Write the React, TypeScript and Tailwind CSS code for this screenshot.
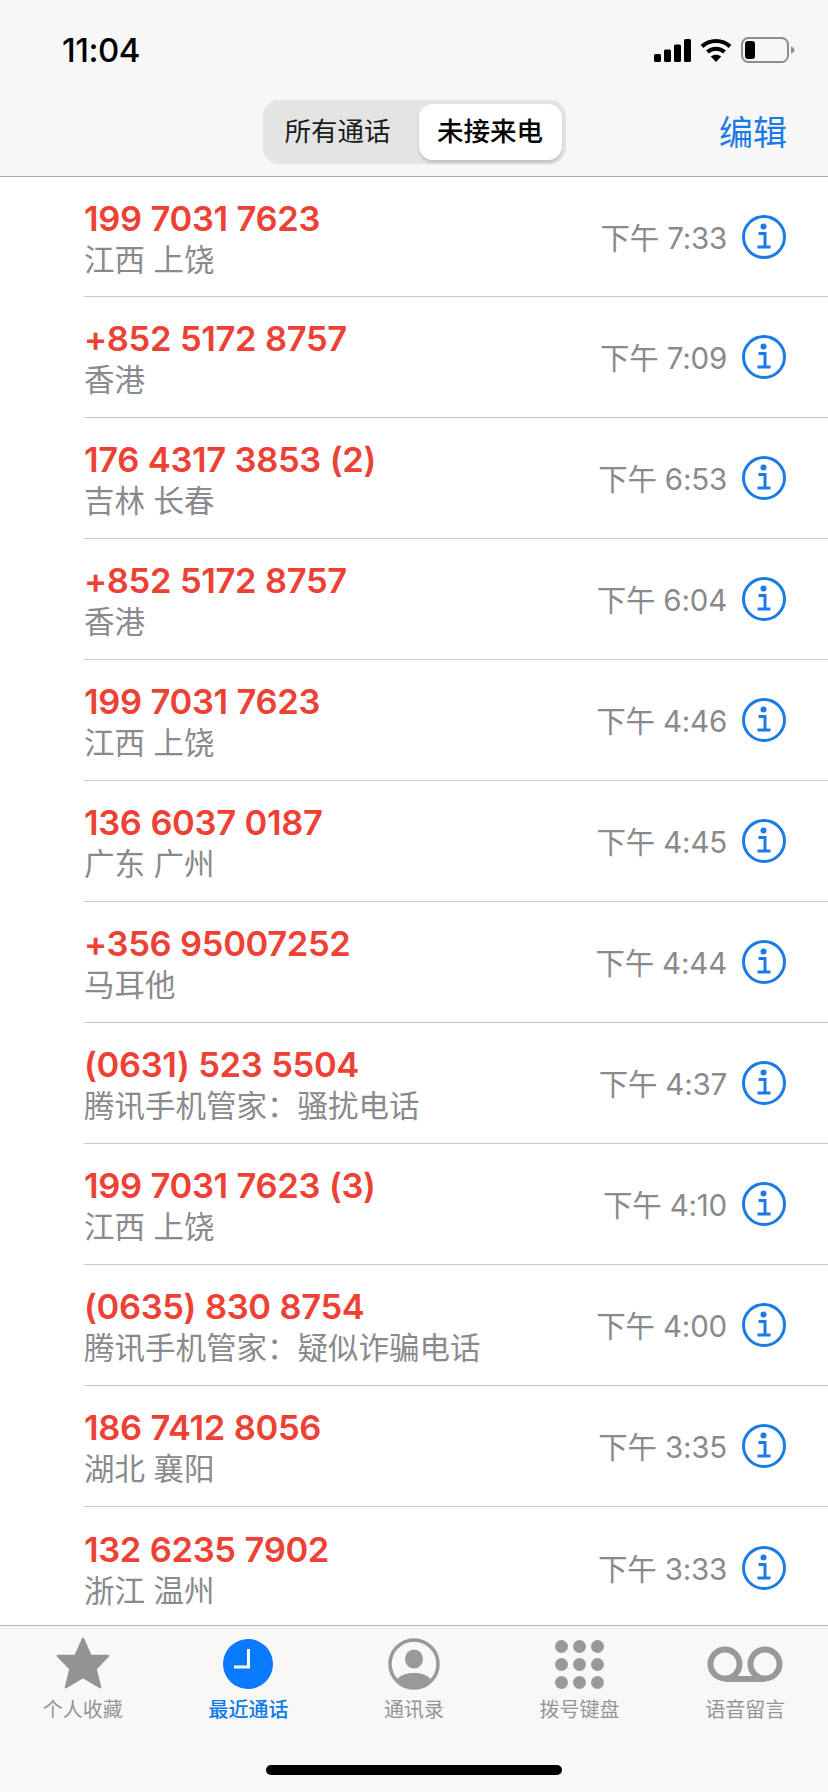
const calls = [
  ["199 7031 7623", "江西 上饶", "下午 7:33"],
  ["+852 5172 8757", "香港", "下午 7:09"],
  ["176 4317 3853 (2)", "吉林 长春", "下午 6:53"],
  ["+852 5172 8757", "香港", "下午 6:04"],
  ["199 7031 7623", "江西 上饶", "下午 4:46"],
  ["136 6037 0187", "广东 广州", "下午 4:45"],
  ["+356 95007252", "马耳他", "下午 4:44"],
  ["(0631) 523 5504", "腾讯手机管家：骚扰电话", "下午 4:37"],
  ["199 7031 7623 (3)", "江西 上饶", "下午 4:10"],
  ["(0635) 830 8754", "腾讯手机管家：疑似诈骗电话", "下午 4:00"],
  ["186 7412 8056", "湖北 襄阳", "下午 3:35"],
  ["132 6235 7902", "浙江 温州", "下午 3:33"],
];

function Info() {
  return (
    <svg width="44" height="44" viewBox="0 0 44 44" className="shrink-0">
      <circle cx="22" cy="22" r="20.5" fill="none" stroke="#1a7ae6" strokeWidth="3" />
      <circle cx="21.5" cy="11.5" r="3" fill="#1a7ae6" />
      <path d="M16.5 18.5h6.5v13M15.5 32h13" fill="none" stroke="#1a7ae6" strokeWidth="3" />
    </svg>
  );
}

function Row({ n, s, t, last }: { n: string; s: string; t: string; last: boolean }) {
  return (
    <div className={"flex h-[121px] items-center pr-[42px] first:h-[120px] " + (last ? "" : "border-b border-[#c9c9c9]")}>
      <div className="mt-[2px] flex min-w-0 flex-1 flex-col">
        <div className="pt-[2px] text-[34.5px] leading-[41px] font-semibold tracking-[-0.35px] [word-spacing:0.5px] text-[#ec4134]">{n}</div>
        <div className="pt-[1px] text-[30.5px] leading-[40px] text-[#8a8a8d]">{s}</div>
      </div>
      <div className="mr-[15px] mt-[3px] text-[29.5px] tracking-[-0.2px] text-[#8a8a8d]">{t}</div>
      <Info />
    </div>
  );
}

function Star() {
  return (
    <svg width="54" height="52" viewBox="0 0 54 52" className="-mt-[3px]">
      <path d="M27 2l7.500 17H52L39.500 32 44 50 27 40 10 50l4.500-18L2 19h17.500z" fill="#959292" stroke="#959292" strokeWidth="2.500" strokeLinejoin="round" />
    </svg>
  );
}

function Clock() {
  return (
    <svg width="50" height="50" viewBox="0 0 50 50">
      <circle cx="25" cy="25" r="25" fill="#0a7aff" />
      <path d="M25.500 10v18H11" fill="none" stroke="#fff" strokeWidth="3" />
    </svg>
  );
}

function Contact() {
  return (
    <svg width="52" height="52" viewBox="0 0 52 52">
      <circle cx="26" cy="26" r="24" fill="none" stroke="#999" strokeWidth="3.500" />
      <ellipse cx="26" cy="21" rx="9" ry="9.500" fill="#999" />
      <path d="M8 43c3-5.500 10-8 18-8s15 2.500 18 8c-4.500 4.500-11 7-18 7s-13.500-2.500-18-7z" fill="#999" />
    </svg>
  );
}

function Keypad() {
  const pos = [6.500, 24.500, 42.500];
  return (
    <svg width="49" height="49" viewBox="0 0 49 49">
      {pos.map((y) =>
        pos.map((x) => <circle key={x + "-" + y} cx={x} cy={y} r="6.500" fill="#999" />)
      )}
    </svg>
  );
}

function Voicemail() {
  return (
    <svg width="76" height="36" viewBox="0 0 76 36">
      <circle cx="18" cy="18" r="14.500" fill="none" stroke="#999" strokeWidth="6" />
      <circle cx="58" cy="18" r="14.500" fill="none" stroke="#999" strokeWidth="6" />
      <path d="M18 33h40" stroke="#999" strokeWidth="6" />
    </svg>
  );
}

const tabs = [
  { label: "个人收藏", icon: <Star />, active: false },
  { label: "最近通话", icon: <Clock />, active: true },
  { label: "通讯录", icon: <Contact />, active: false },
  { label: "拨号键盘", icon: <Keypad />, active: false },
  { label: "语音留言", icon: <Voicemail />, active: false },
];

export default function App() {
  return (
    <div className="flex h-[1792px] w-[828px] flex-col overflow-hidden bg-white font-['Inter','Noto_Sans_CJK_SC',sans-serif]">
      <header className="h-[177px] shrink-0 border-b border-[#a9a9a9] bg-[#f7f7f7]">
        <div className="flex h-[100px] items-start justify-between pt-[31px] pl-[62px] pr-[33px]">
          <span className="text-[33px] leading-[38px] font-medium tracking-[-0.5px] text-black">11:04</span>
          <div className="flex items-center gap-[9px] pt-[6px]">
            <svg width="37" height="23" viewBox="0 0 37 23">
              <rect x="0" y="15" width="7" height="8" rx="1.500" fill="#000" />
              <rect x="10" y="10.500" width="7" height="12.500" rx="1.500" fill="#000" />
              <rect x="20" y="5.500" width="7" height="17.500" rx="1.500" fill="#000" />
              <rect x="30" y="0" width="7" height="23" rx="1.500" fill="#000" />
            </svg>
            <svg width="32" height="24" viewBox="0 0 32 24">
              <path d="M2 8.500C9.500 1 22.500 1 30 8.500" fill="none" stroke="#000" strokeWidth="4" />
              <path d="M7.500 14c4.500-4.500 12.500-4.500 17 0" fill="none" stroke="#000" strokeWidth="4" />
              <path d="M10.800 18.500c3-2.500 7.400-2.500 10.400 0L16 24z" fill="#000" />
            </svg>
            <svg width="54" height="26" viewBox="0 0 54 26">
              <rect x="1" y="1" width="46" height="24" rx="6.500" fill="none" stroke="#8d8d8d" strokeWidth="2" />
              <rect x="4" y="4" width="10" height="18" rx="3" fill="#000" />
              <path d="M50 9.500c2 .5 3.500 2 3.500 3.500s-1.500 3-3.500 3.500z" fill="#8d8d8d" />
            </svg>
          </div>
        </div>
        <div className="grid h-[64px] grid-cols-[1fr_auto_1fr] items-center">
          <div />
          <div className="flex h-[64px] w-[303px] items-center rounded-[16px] bg-[#e4e4e5] pl-[4px] pr-[4px]">
            <div className="flex-1 pr-[10px] text-center text-[26.5px] text-[#1c1c1c]">所有通话</div>
            <div className="flex h-[56px] w-[143px] items-center justify-center rounded-[14px] bg-white text-[26.5px] font-medium text-black shadow-[0_3px_3px_rgba(0,0,0,0.14)]">未接来电</div>
          </div>
          <div className="pr-[41px] text-right text-[34px] text-[#1a7ae6]">编辑</div>
        </div>
      </header>
      <main className="min-h-0 flex-1 pl-[84px]">
        {calls.map((c, i) => (
          <Row key={i} n={c[0]} s={c[1]} t={c[2]} last={i === calls.length - 1} />
        ))}
      </main>
      <footer className="h-[167px] shrink-0 border-t border-[#b5b5b5] bg-[#f9f8f8]">
        <div className="grid grid-cols-5 pt-[12px]">
          {tabs.map((t) => (
            <div key={t.label} className="flex flex-col items-center">
              <div className="flex h-[52px] items-center justify-center">{t.icon}</div>
              <div className={"mt-[6px] text-[20px] leading-[28px] " + (t.active ? "font-medium text-[#0f7be8]" : "text-[#959597]")}>{t.label}</div>
            </div>
          ))}
        </div>
        <div className="mx-auto mt-[41px] h-[10px] w-[296px] rounded-full bg-black" />
      </footer>
    </div>
  );
}
